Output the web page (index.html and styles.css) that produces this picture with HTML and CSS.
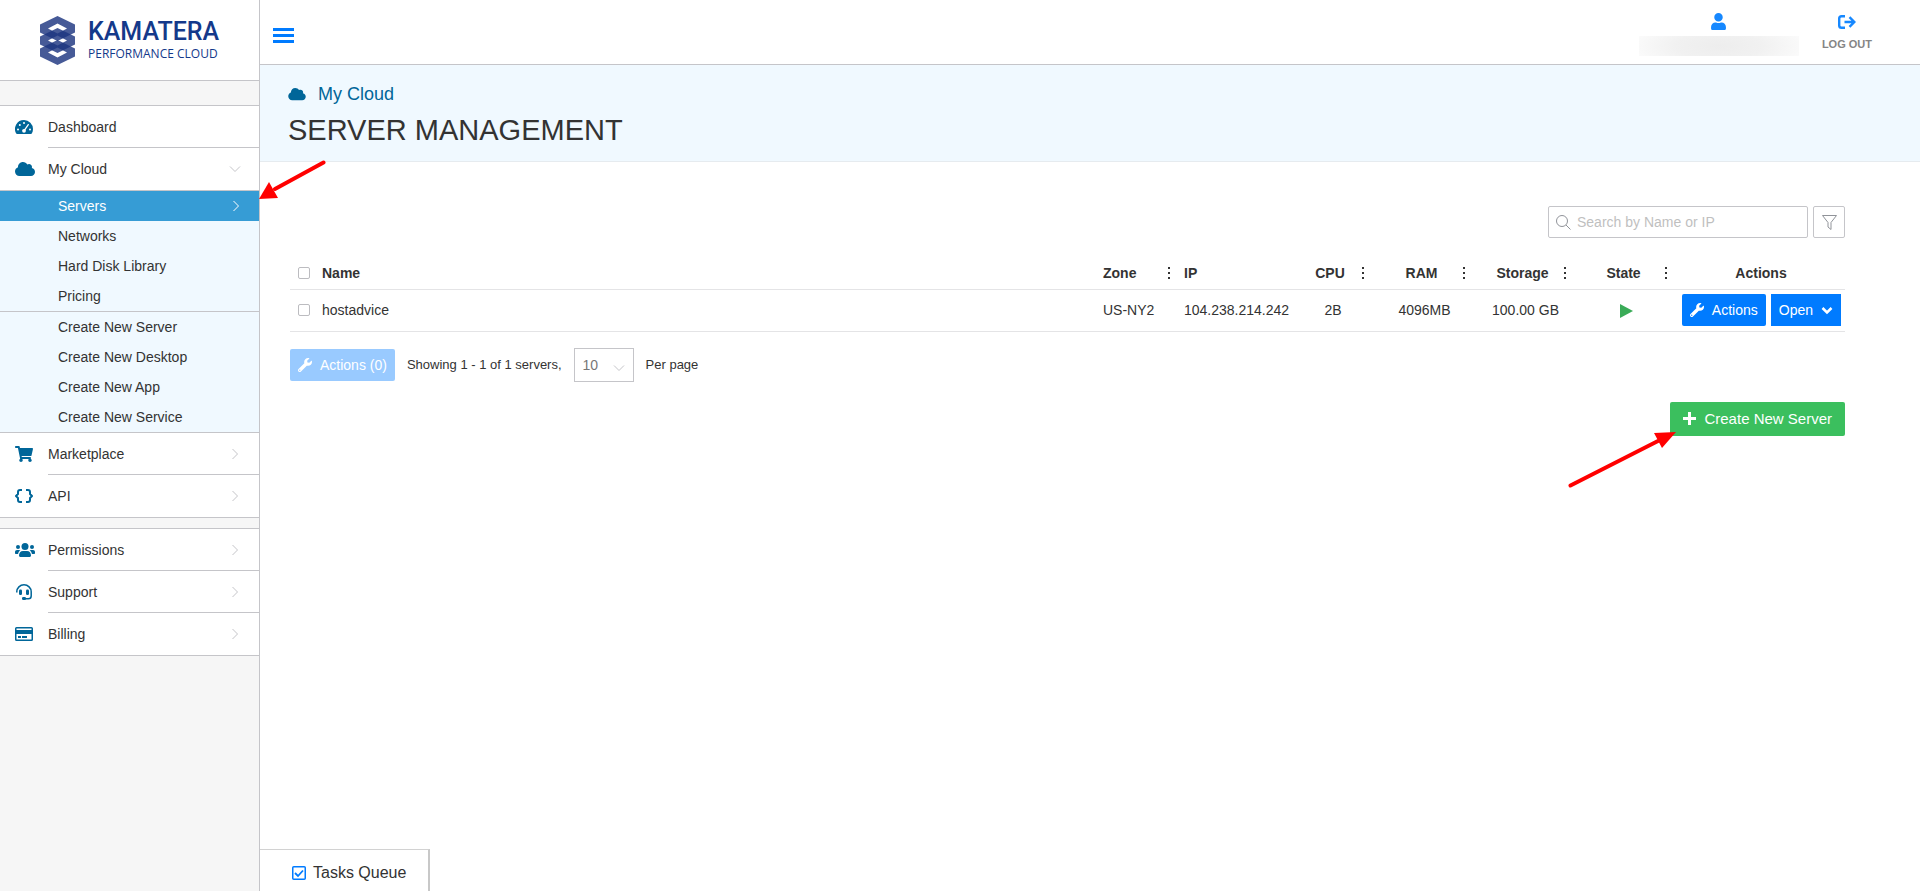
FILE: index.html
```html
<!DOCTYPE html>
<html lang="en">

<head>
    <meta charset="UTF-8" />
    <meta name="viewport" content="width=device-width, initial-scale=1" />
    <title>Server Management</title>
    <link rel="stylesheet" href="styles.css">
</head>

<body>

    <!-- Shared icons -->
    <svg class="sprite" aria-hidden="true">
        <symbol id="i-cloud" viewBox="0 0 640 512">
            <path d="M537.6 226.6c4.1-10.7 6.4-22.4 6.4-34.6 0-53-43-96-96-96-19.7 0-38.1 6-53.3 16.2C367 64.2 315.3 32 256 32c-88.4 0-160 71.6-160 160 0 2.7.1 5.4.2 8.1C40.2 219.8 0 273.2 0 336c0 79.5 64.5 144 144 144h368c70.7 0 128-57.3 128-128 0-61.9-44-113.6-102.4-125.4z" />
        </symbol>
        <symbol id="i-wrench" viewBox="0 0 512 512">
            <path d="M507.73 109.1c-2.24-9.03-13.54-12.09-20.12-5.51l-74.36 74.36-67.88-11.31-11.31-67.88 74.36-74.36c6.62-6.62 3.43-17.9-5.66-20.16-47.38-11.74-99.55.91-136.58 37.93-39.64 39.64-50.55 97.1-34.05 147.2L18.74 402.76c-24.99 24.99-24.99 65.51 0 90.5 24.99 24.99 65.51 24.99 90.5 0l213.21-213.21c50.12 16.71 107.47 5.68 147.37-34.22 37.07-37.07 49.7-89.32 37.91-136.73zM64 472c-13.25 0-24-10.75-24-24 0-13.26 10.75-24 24-24s24 10.74 24 24c0 13.25-10.75 24-24 24z" />
        </symbol>
        <symbol id="i-chevron" viewBox="0 0 12 12">
            <path d="M3.500 1l5 5-5 5" fill="none" stroke="currentColor" />
        </symbol>
    </svg>

    <div class="app">

        <aside class="sidebar">
            <a href="#" class="logo">
                <svg width="35" height="49" viewBox="0 0 35 49" fill="#1d3680" fill-opacity="0.82" fill-rule="evenodd">
                    <path d="M0 8.500 17.500 0 35 8.500V16.500L17.500 25 0 16.500zM8 12.500 17.500 17.500 27 12.500 17.500 7.500z" />
                    <path d="M0 20.500 17.500 12 35 20.500V28.500L17.500 37 0 28.500zM8 24.500 17.500 29.500 27 24.500 17.500 19.500z" />
                    <path d="M0 32.500 17.500 24 35 32.500V40.500L17.500 49 0 40.500zM8 36.500 17.500 41.500 27 36.500 17.500 31.500z" />
                </svg>
                <span class="logo-text">
                    <span class="logo-name">KAMATERA</span>
                    <span class="logo-sub">PERFORMANCE CLOUD</span>
                </span>
            </a>

            <nav>
                <ul class="menu">
                    <li>
                        <a href="#" class="menu-item">
                            <svg class="menu-icon" viewBox="0 0 18 14">
                                <path d="M9 0a9 9 0 0 1 9 9c0 1.700-.4 3.200-1.200 4.500-.2.300-.5.500-.9.500H2.100c-.4 0-.7-.2-.9-.5A9 9 0 0 1 9 0z" />
                                <g fill="#fff">
                                    <circle cx="3" cy="9.500" r="1" />
                                    <circle cx="4.800" cy="5" r="1" />
                                    <circle cx="9" cy="3" r="1" />
                                    <circle cx="15" cy="9.500" r="1" />
                                    <circle cx="9" cy="10.800" r="1.900" />
                                </g>
                                <path d="M9.300 10.300 13.300 4.600" stroke="#fff" stroke-width="1.300" stroke-linecap="round" />
                            </svg>
                            <span class="menu-label">Dashboard</span>
                        </a>
                    </li>
                    <li>
                        <a href="#" class="menu-item">
                            <svg class="menu-icon wide"><use href="#i-cloud" /></svg>
                            <span class="menu-label">My Cloud</span>
                            <svg class="chevron down"><use href="#i-chevron" /></svg>
                        </a>
                        <ul class="submenu">
                            <li><a href="#" class="active">Servers<svg class="chevron"><use href="#i-chevron" /></svg></a></li>
                            <li><a href="#">Networks</a></li>
                            <li><a href="#">Hard Disk Library</a></li>
                            <li><a href="#">Pricing</a></li>
                        </ul>
                        <ul class="submenu">
                            <li><a href="#">Create New Server</a></li>
                            <li><a href="#">Create New Desktop</a></li>
                            <li><a href="#">Create New App</a></li>
                            <li><a href="#">Create New Service</a></li>
                        </ul>
                    </li>
                    <li>
                        <a href="#" class="menu-item">
                            <svg class="menu-icon" viewBox="0 0 576 512">
                                <path d="M528.12 301.319l47.273-208C578.806 78.301 567.391 64 551.99 64H159.208l-9.166-44.81C147.758 8.021 137.93 0 126.529 0H24C10.745 0 0 10.745 0 24v16c0 13.255 10.745 24 24 24h69.883l70.248 343.435C147.325 417.1 136 435.222 136 456c0 30.928 25.072 56 56 56s56-25.072 56-56c0-15.674-6.447-29.835-16.824-40h209.647C430.447 426.165 424 440.326 424 456c0 30.928 25.072 56 56 56s56-25.072 56-56c0-22.172-12.888-41.332-31.579-50.405l5.517-24.276c3.413-15.018-8.002-29.319-23.403-29.319H218.117l-6.545-32h293.145c11.206 0 20.92-7.754 23.403-18.681z" />
                            </svg>
                            <span class="menu-label">Marketplace</span>
                            <svg class="chevron"><use href="#i-chevron" /></svg>
                        </a>
                    </li>
                    <li>
                        <a href="#" class="menu-item">
                            <svg class="menu-icon" viewBox="0 0 18 14">
                                <g fill="none" stroke="currentColor" stroke-width="2" stroke-linejoin="round">
                                    <path d="M7 1H5Q3 1 3 3v2L1 7l2 2v2q0 2 2 2h2" />
                                    <path d="M11 1h2q2 0 2 2v2l2 2-2 2v2q0 2-2 2h-2" />
                                </g>
                            </svg>
                            <span class="menu-label">API</span>
                            <svg class="chevron"><use href="#i-chevron" /></svg>
                        </a>
                    </li>
                </ul>

                <ul class="menu">
                    <li>
                        <a href="#" class="menu-item">
                            <svg class="menu-icon wide" viewBox="0 0 20 14">
                                <circle cx="10" cy="3.500" r="3.500" />
                                <circle cx="3" cy="4" r="2" />
                                <circle cx="17" cy="4" r="2" />
                                <path d="M4 12.500C4 9.800 5.500 8 8 8h4c2.500 0 4 1.800 4 4.500 0 .9-.6 1.500-1.500 1.500h-9C4.600 14 4 13.400 4 12.500z" />
                                <path d="M0 9c0-1.200.8-2 2-2h2c.5 0 1 .2 1.400.6C4.200 8.300 3.400 9.400 3.100 11H1c-.6 0-1-.4-1-1zM20 9c0-1.200-.8-2-2-2h-2c-.5 0-1 .2-1.400.6 1.200.7 2 1.800 2.300 3.400H19c.6 0 1-.4 1-1z" />
                            </svg>
                            <span class="menu-label">Permissions</span>
                            <svg class="chevron"><use href="#i-chevron" /></svg>
                        </a>
                    </li>
                    <li>
                        <a href="#" class="menu-item">
                            <svg class="menu-icon" viewBox="0 0 18 16">
                                <path d="M1.800 8.500V7.800a7.200 7 0 0 1 14.400 0V12c0 1.700-1 2.800-2.800 2.800H10" fill="none" stroke="currentColor" stroke-width="1.500" />
                                <rect x="4" y="5.500" width="3" height="5.500" rx="1.200" />
                                <rect x="11" y="5.500" width="3" height="5.500" rx="1.200" />
                                <rect x="7" y="13" width="4" height="3" rx="1.200" />
                            </svg>
                            <span class="menu-label">Support</span>
                            <svg class="chevron"><use href="#i-chevron" /></svg>
                        </a>
                    </li>
                    <li>
                        <a href="#" class="menu-item">
                            <svg class="menu-icon" viewBox="0 0 18 14">
                                <path fill-rule="evenodd" d="M1.500 0h15A1.500 1.500 0 0 1 18 1.500v11a1.500 1.500 0 0 1-1.500 1.500h-15A1.500 1.500 0 0 1 0 12.500v-11A1.500 1.500 0 0 1 1.500 0zM1.500 1.500V3h15V1.500zM1.500 7v5.500h15V7z" />
                                <path d="M3 9h3v2H3zM7 9h5v2H7z" />
                            </svg>
                            <span class="menu-label">Billing</span>
                            <svg class="chevron"><use href="#i-chevron" /></svg>
                        </a>
                    </li>
                </ul>
            </nav>
        </aside>

        <div class="content">

            <header class="topbar">
                <button class="burger" aria-label="Toggle menu">
                    <svg width="21" height="16" viewBox="0 0 21 16" fill="#007bff">
                        <path d="M0 0h21v3H0zM0 6h21v3H0zM0 12h21v3H0z" />
                    </svg>
                </button>
                <div class="topbar-right">
                    <a href="#" class="account" aria-label="Account">
                        <svg width="15" height="17" viewBox="0 0 448 512">
                            <path d="M224 256c70.7 0 128-57.3 128-128S294.7 0 224 0 96 57.3 96 128s57.3 128 128 128zm89.6 32h-16.7c-22.2 10.2-46.9 16-72.9 16s-50.6-5.8-72.9-16h-16.7C60.2 288 0 348.2 0 422.4V464c0 26.5 21.5 48 48 48h352c26.500 0 48-21.500 48-48v-41.6c0-74.200-60.200-134.400-134.400-134.400z" />
                        </svg>
                        <span class="account-name"></span>
                    </a>
                    <a href="#" class="logout">
                        <svg width="18" height="14" viewBox="0 0 18 14">
                            <path d="M7 1.200H3.500Q1.200 1.200 1.200 3.500v7Q1.200 12.800 3.500 12.800H7M6.500 7H16M11.500 2.200 16.300 7 11.500 11.800" fill="none" stroke="currentColor" stroke-width="2.400" />
                        </svg>
                        <span>LOG OUT</span>
                    </a>
                </div>
            </header>

            <div class="page-head">
                <a href="#" class="crumb"><svg width="18" height="14"><use href="#i-cloud" /></svg>My Cloud</a>
                <h1>SERVER MANAGEMENT</h1>
            </div>

            <main>
                <div class="filters">
                    <label class="search">
                        <svg width="15" height="15" viewBox="0 0 15 15" fill="none" stroke="#909399">
                            <circle cx="6" cy="6" r="5.500" />
                            <path d="M10 10l4.500 4.500" />
                        </svg>
                        <input type="text" placeholder="Search by Name or IP" aria-label="Search by Name or IP">
                    </label>
                    <button class="filter-btn" aria-label="Filter">
                        <svg width="15" height="15" viewBox="0 0 15 15" fill="none" stroke="#909399" stroke-linejoin="round">
                            <path d="M.5.5h14L9 7.500v7L6 12V7.500z" />
                        </svg>
                    </button>
                </div>

                <table class="servers">
                    <colgroup>
                        <col class="col-check">
                        <col>
                        <col class="col-zone">
                        <col class="col-ip">
                        <col class="col-cpu">
                        <col class="col-std">
                        <col class="col-std">
                        <col class="col-std">
                        <col class="col-actions">
                    </colgroup>
                    <thead>
                        <tr>
                            <th><input type="checkbox" aria-label="Select all servers"></th>
                            <th>Name</th>
                            <th class="flush"><div class="th"><span>Zone</span><button class="dots" aria-label="Zone options"></button></div></th>
                            <th>IP</th>
                            <th class="center"><div class="th"><span>CPU</span><button class="dots" aria-label="CPU options"></button></div></th>
                            <th class="center"><div class="th"><span>RAM</span><button class="dots" aria-label="RAM options"></button></div></th>
                            <th class="center"><div class="th"><span>Storage</span><button class="dots" aria-label="Storage options"></button></div></th>
                            <th class="center"><div class="th"><span>State</span><button class="dots" aria-label="State options"></button></div></th>
                            <th class="center">Actions</th>
                        </tr>
                    </thead>
                    <tbody>
                        <tr>
                            <td><input type="checkbox" aria-label="Select hostadvice"></td>
                            <td>hostadvice</td>
                            <td>US-NY2</td>
                            <td>104.238.214.242</td>
                            <td class="center">2B</td>
                            <td class="center">4096MB</td>
                            <td class="center">100.00 GB</td>
                            <td class="center">
                                <svg class="state" width="13" height="14" viewBox="0 0 13 14" role="img" aria-label="Running">
                                    <path d="M0 0l13 7-13 7z" fill="#3aab58" />
                                </svg>
                            </td>
                            <td>
                                <div class="row-actions">
                                    <button class="btn"><svg width="14" height="14"><use href="#i-wrench" /></svg>Actions</button>
                                    <button class="btn btn-open">Open<svg width="12" height="12" viewBox="0 0 12 12"><path d="M1.500 4 6 8.500 10.500 4" fill="none" stroke="#fff" stroke-width="2.500" /></svg></button>
                                </div>
                            </td>
                        </tr>
                    </tbody>
                </table>

                <div class="table-foot">
                    <button class="btn" disabled><svg width="14" height="14"><use href="#i-wrench" /></svg>Actions (0)</button>
                    <span class="foot-text">Showing 1 - 1 of 1 servers,</span>
                    <div class="select">
                        <select id="per-page">
                            <option>10</option>
                            <option>25</option>
                            <option>50</option>
                        </select>
                        <svg class="chevron down"><use href="#i-chevron" /></svg>
                    </div>
                    <label class="foot-text" for="per-page">Per page</label>
                </div>

                <div class="create">
                    <button class="btn btn-create">
                        <svg width="13" height="13" viewBox="0 0 13 13"><path d="M5 0h3v5h5v3H8v5H5V8H0V5h5z" /></svg>Create New Server
                    </button>
                    <svg class="arrow arrow-create" width="108" height="56" viewBox="0 0 108 56">
                        <path d="M2.500 53.500 90 9" />
                        <path class="arrow-tip" d="M108 0 86 1l8 15z" />
                    </svg>
                </div>
            </main>

            <a href="#" class="tasks">
                <svg width="14" height="14" viewBox="0 0 14 14" fill="none" stroke="#007bff">
                    <rect x="0.750" y="0.750" width="12.500" height="12.500" rx="1" stroke-width="1.500" />
                    <path d="M3 7l3 3 5-5.500" stroke-width="1.800" />
                </svg>
                Tasks Queue
            </a>

            <svg class="arrow arrow-menu" width="68" height="42" viewBox="0 0 68 42">
                <path d="M64.500 2.500 16 29" />
                <path class="arrow-tip" d="M0 39 10 22l9 16z" />
            </svg>
        </div>
    </div>

</body>

</html>
```
FILE: styles.css
```css
* {
    box-sizing: border-box;
}

body {
    margin: 0;
    font-family: "Liberation Sans", Arial, Helvetica, sans-serif;
    font-size: 14px;
    color: #333;
    fill: currentColor;
    background: #fff;
}

a {
    color: inherit;
    text-decoration: none;
}

ul {
    list-style: none;
    margin: 0;
    padding: 0;
}

button,
input,
select {
    font: inherit;
    color: inherit;
}

button {
    cursor: pointer;
}

svg {
    flex: none;
}

.sprite {
    display: none;
}

.app {
    display: flex;
    min-height: 100vh;
}

/* Sidebar */
.sidebar {
    flex: none;
    width: 260px;
    background: #f6f6f6;
    border-right: 1px solid #c5c5c9;
}

.logo {
    display: flex;
    align-items: center;
    gap: 13px;
    height: 81px;
    padding-left: 40px;
    background: #fff;
    border-bottom: 1px solid #c5c5c9;
    margin-bottom: 24px;
}

.logo-text {
    display: flex;
    flex-direction: column;
    color: #14398a;
}

.logo-name {
    font-family: Roboto, sans-serif;
    font-size: 25px;
    line-height: 28px;
    font-weight: 500;
}

.logo-sub {
    font-family: "Open Sans", sans-serif;
    font-size: 12px;
    line-height: 16px;
}

.menu {
    background: #fff;
    border-top: 1px solid #c5c5c9;
    border-bottom: 1px solid #c5c5c9;
    margin-bottom: 10px;
}

.menu-item {
    display: flex;
    align-items: center;
    padding-left: 15px;
    color: #006699;
}

.menu-icon {
    width: 18px;
    height: 16px;
    margin-right: 15px;
}

.menu-icon.wide {
    width: 20px;
    margin-right: 13px;
}

.menu-label {
    flex: 1;
    line-height: 42px;
    color: #333;
}

/* divider starts at the label, not at the icon */
.menu > li:not(:last-child) {
    background: linear-gradient(#c5c5c9, #c5c5c9) right bottom / calc(100% - 48px) 1px no-repeat;
}

.chevron {
    width: 12px;
    height: 12px;
    margin-right: 18px;
    color: #c5c5c9;
}

.chevron.down {
    transform: rotate(90deg);
}

.submenu {
    background: #f0f9ff;
    border-top: 1px solid #c5c5c9;
}

.submenu:last-child {
    border-bottom: 1px solid #c5c5c9;
}

.submenu a {
    display: flex;
    align-items: center;
    justify-content: space-between;
    padding-left: 58px;
    line-height: 30px;
}

.submenu .active {
    background: #369cd5;
    color: #fff;
}

.submenu .active .chevron {
    color: #fff;
    margin-right: 17px;
}

/* Content */
.content {
    position: relative;
    flex: 1;
    min-width: 0;
    display: flex;
    flex-direction: column;
}

.topbar {
    display: flex;
    justify-content: space-between;
    align-items: flex-start;
    padding: 13px 48px 8px 13px;
    border-bottom: 1px solid #c5c5c9;
}

.burger {
    display: flex;
    padding: 0;
    margin-top: 15px;
    border: 0;
    background: none;
}

.topbar-right {
    display: flex;
    gap: 23px;
    color: #1688ff;
}

.account,
.logout {
    display: flex;
    flex-direction: column;
    align-items: center;
    gap: 6px;
}

.logout {
    padding-top: 2px;
    gap: 9px;
}

.logout span {
    font-size: 11px;
    line-height: 12px;
    font-weight: bold;
    color: #858585;
}

.account-name {
    width: 160px;
    height: 20px;
    background: radial-gradient(ellipse 55% 130%, #ededed 0%, #f1f1f1 50%, #fbfbfb 100%);
}

.page-head {
    padding: 16px 28px 13px;
    background: #f0f9ff;
    border-bottom: 1px solid #e6ebef;
}

.crumb {
    display: flex;
    align-items: center;
    gap: 12px;
    font-size: 18px;
    line-height: 26px;
    color: #006699;
}

h1 {
    margin: 5px 0 0;
    font-size: 29px;
    line-height: 36px;
    font-weight: normal;
}

main {
    flex: 1;
    padding: 44px 75px 0 30px;
}

.filters {
    display: flex;
    justify-content: flex-end;
    gap: 5px;
}

.search {
    display: flex;
    align-items: center;
    gap: 6px;
    width: 260px;
    padding-left: 7px;
    border: 1px solid #c5c5c9;
    border-radius: 2px;
}

.search input {
    flex: 1;
    min-width: 0;
    border: 0;
    outline: 0;
    padding: 0;
    background: none;
}

.search input::placeholder {
    color: #bfbfbf;
}

.filter-btn {
    display: flex;
    align-items: center;
    justify-content: center;
    width: 32px;
    height: 32px;
    padding: 0;
    border: 1px solid #c5c5c9;
    border-radius: 2px;
    background: #fff;
}

/* Servers table */
.servers {
    width: 100%;
    margin-top: 20px;
    table-layout: fixed;
    border-collapse: collapse;
}

.col-check { width: 24px; }
.col-zone { width: 81px; }
.col-ip { width: 116px; }
.col-cpu { width: 82px; }
.col-std { width: 101px; }
.col-actions { width: 168px; }

.servers th,
.servers td {
    height: 42px;
    padding: 0 8px;
    text-align: left;
    border-bottom: 1px solid #e4e4e6;
}

.servers th {
    height: 31px;
}

.servers .flush {
    padding-right: 4px;
}

.servers .center {
    text-align: center;
}

.th {
    display: flex;
    align-items: center;
}

.th span {
    flex: 1;
}

.dots {
    width: 6px;
    height: 12px;
    padding: 0;
    border: 0;
    background: repeating-linear-gradient(#333 0 2px, transparent 2px 5px) center / 2px 12px no-repeat;
}

input[type="checkbox"] {
    appearance: none;
    display: block;
    width: 12px;
    height: 12px;
    margin: 0;
    border: 1px solid #bcbcc0;
    border-radius: 2px;
    background: #fff;
}

.state {
    display: inline-block;
    vertical-align: middle;
}

.servers td:last-child {
    padding: 0 4px;
}

.row-actions {
    display: flex;
    justify-content: flex-end;
    gap: 5px;
}

.btn {
    display: flex;
    align-items: center;
    gap: 8px;
    height: 32px;
    padding: 0 8px;
    border: 0;
    border-radius: 2px;
    background: #007bff;
    color: #fff;
    white-space: nowrap;
}

.btn-open {
    border-radius: 0;
}

.btn:disabled {
    background: #99caff;
    cursor: default;
}

.table-foot {
    display: flex;
    align-items: center;
    gap: 12px;
    margin-top: 16px;
}

.foot-text {
    font-size: 13px;
}

.select {
    position: relative;
}

.select select {
    appearance: none;
    display: block;
    width: 60px;
    height: 34px;
    padding: 0 8px;
    border: 1px solid #c5c5c9;
    border-radius: 0;
    background: #fff;
    color: #777;
}

.select .chevron {
    position: absolute;
    right: 9px;
    top: 14px;
    margin: 0;
    pointer-events: none;
}

.create {
    position: relative;
    display: flex;
    justify-content: flex-end;
    margin-top: 20px;
}

.btn-create {
    height: 34px;
    padding: 0 13px;
    font-size: 15px;
    background: #3bbf5e;
}

.tasks {
    display: flex;
    align-items: center;
    align-self: flex-start;
    gap: 7px;
    height: 42px;
    padding: 4px 22px 0 32px;
    font-size: 16px;
    border-top: 1px solid #d2d2d2;
    border-right: 2px solid #c8c8c8;
}

/* Pointers to the menu entry and the create button */
.arrow {
    position: absolute;
    pointer-events: none;
    fill: none;
    stroke: #f00;
    stroke-width: 4;
    stroke-linecap: round;
}

.arrow-tip {
    fill: #f00;
    stroke: none;
}

.arrow-menu {
    left: -1px;
    top: 160px;
}

.arrow-create {
    right: 169px;
    top: 30px;
}
```
